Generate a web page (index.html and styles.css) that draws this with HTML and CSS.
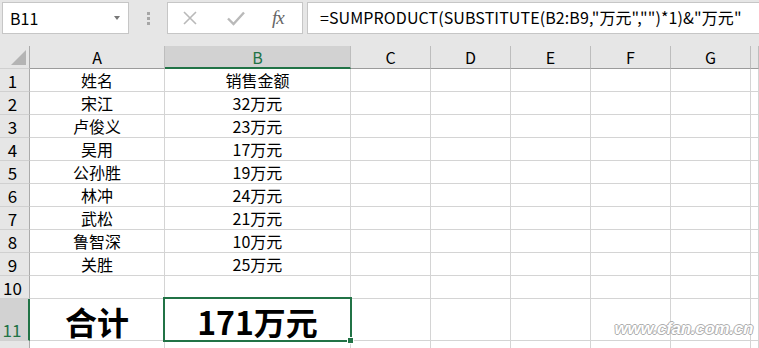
FILE: index.html
```html
<!DOCTYPE html>
<html>
<head>
  <title>Book1 - Excel</title>
  <link rel="stylesheet" href="styles.css">
</head>
<body>
  <div class="toolbar">
    <div class="namebox">
      <span>B11</span>
      <span class="caret"></span>
    </div>
    <div class="grip">
      <i></i><i></i><i></i>
    </div>
    <div class="fbuttons">
      <svg class="btn-icon" width="16" height="16" viewBox="0 0 16 16">
        <path d="M2 2 L14 14 M14 2 L2 14" stroke="#b9b9b9" stroke-width="1.6" fill="none"/>
      </svg>
      <svg class="btn-icon" width="18" height="16" viewBox="0 0 18 16">
        <path d="M1 8.5 L6.5 14 L17 2.5" stroke="#b9b9b9" stroke-width="2.4" fill="none"/>
      </svg>
      <span class="fx">fx</span>
    </div>
    <div class="formula">=SUMPRODUCT(SUBSTITUTE(B2:B9,"万元","")*1)&amp;"万元"</div>
  </div>

  <div class="sheet">
    <div class="row hdr">
      <div class="rh corner"><span class="tri"></span></div>
      <div class="ca">A</div>
      <div class="cb sel">B</div>
      <div class="c">C</div>
      <div class="c">D</div>
      <div class="c">E</div>
      <div class="c">F</div>
      <div class="c">G</div>
      <div class="cx"></div>
    </div>

    <div class="row">
      <div class="rh">1</div>
      <div class="ca">姓名</div>
      <div class="cb">销售金额</div>
      <div class="c"></div><div class="c"></div><div class="c"></div><div class="c"></div><div class="c"></div><div class="cx"></div>
    </div>
    <div class="row">
      <div class="rh">2</div>
      <div class="ca">宋江</div>
      <div class="cb">32万元</div>
      <div class="c"></div><div class="c"></div><div class="c"></div><div class="c"></div><div class="c"></div><div class="cx"></div>
    </div>
    <div class="row">
      <div class="rh">3</div>
      <div class="ca">卢俊义</div>
      <div class="cb">23万元</div>
      <div class="c"></div><div class="c"></div><div class="c"></div><div class="c"></div><div class="c"></div><div class="cx"></div>
    </div>
    <div class="row">
      <div class="rh">4</div>
      <div class="ca">吴用</div>
      <div class="cb">17万元</div>
      <div class="c"></div><div class="c"></div><div class="c"></div><div class="c"></div><div class="c"></div><div class="cx"></div>
    </div>
    <div class="row">
      <div class="rh">5</div>
      <div class="ca">公孙胜</div>
      <div class="cb">19万元</div>
      <div class="c"></div><div class="c"></div><div class="c"></div><div class="c"></div><div class="c"></div><div class="cx"></div>
    </div>
    <div class="row">
      <div class="rh">6</div>
      <div class="ca">林冲</div>
      <div class="cb">24万元</div>
      <div class="c"></div><div class="c"></div><div class="c"></div><div class="c"></div><div class="c"></div><div class="cx"></div>
    </div>
    <div class="row">
      <div class="rh">7</div>
      <div class="ca">武松</div>
      <div class="cb">21万元</div>
      <div class="c"></div><div class="c"></div><div class="c"></div><div class="c"></div><div class="c"></div><div class="cx"></div>
    </div>
    <div class="row">
      <div class="rh">8</div>
      <div class="ca">鲁智深</div>
      <div class="cb">10万元</div>
      <div class="c"></div><div class="c"></div><div class="c"></div><div class="c"></div><div class="c"></div><div class="cx"></div>
    </div>
    <div class="row">
      <div class="rh">9</div>
      <div class="ca">关胜</div>
      <div class="cb">25万元</div>
      <div class="c"></div><div class="c"></div><div class="c"></div><div class="c"></div><div class="c"></div><div class="cx"></div>
    </div>
    <div class="row">
      <div class="rh">10</div>
      <div class="ca"></div>
      <div class="cb"></div>
      <div class="c"></div><div class="c"></div><div class="c"></div><div class="c"></div><div class="c"></div><div class="cx"></div>
    </div>
    <div class="row tall">
      <div class="rh sel">11</div>
      <div class="ca big">合计</div>
      <div class="cb big active">171万元<span class="handle"></span></div>
      <div class="c"></div><div class="c"></div><div class="c"></div><div class="c"></div><div class="c"></div><div class="cx"></div>
    </div>
    <div class="row short">
      <div class="rh"></div>
      <div class="ca"></div>
      <div class="cb"></div>
      <div class="c"></div><div class="c"></div><div class="c"></div><div class="c"></div><div class="c"></div><div class="cx"></div>
    </div>

    <div class="stamp">www.cfan.com.cn</div>
  </div>
</body>
</html>
```

FILE: styles.css
```css
body {
  margin: 0;
  background-color: #e6e6e6;
  font-family: "Noto Sans CJK SC", "Noto Sans", sans-serif;
  color: #000;
  overflow: hidden;
}

/* name box + formula bar */
.toolbar {
  height: 46px;
  display: flex;
  align-items: flex-start;
  padding: 2px 0 0 2px;
  box-sizing: border-box;
}

.namebox {
  width: 127px;
  height: 32px;
  box-sizing: border-box;
  background-color: #fff;
  border: 1px solid #c6c6c6;
  display: flex;
  align-items: center;
  justify-content: space-between;
  padding: 0 8px 0 7px;
  font-size: 16px;
}

.caret {
  width: 0;
  height: 0;
  border-left: 3.5px solid transparent;
  border-right: 3.5px solid transparent;
  border-top: 4px solid #777;
}

.grip {
  width: 38px;
  height: 32px;
  display: flex;
  flex-direction: column;
  align-items: center;
  justify-content: center;
  gap: 2px;
}

.grip i {
  width: 3px;
  height: 3px;
  background-color: #a6a6a6;
}

.fbuttons {
  width: 136px;
  height: 32px;
  box-sizing: border-box;
  background-color: #fff;
  border: 1px solid #c6c6c6;
  display: flex;
  align-items: center;
  padding-left: 14px;
}

.btn-icon {
  margin-right: 29px;
}

.btn-icon + .btn-icon {
  margin-right: 27px;
}

.fx {
  font-family: "Liberation Serif", serif;
  font-style: italic;
  font-size: 19px;
  color: #666;
  letter-spacing: -1px;
}

.formula {
  flex: 1;
  height: 32px;
  margin-left: 4px;
  box-sizing: border-box;
  background-color: #fff;
  border: 1px solid #c6c6c6;
  border-right: none;
  padding-left: 12px;
  font-size: 16px;
  letter-spacing: 0.1px;
  line-height: 29px;
  white-space: nowrap;
}

/* grid */
.sheet {
  position: relative;
  background-color: #fff;
}

.row {
  display: flex;
  height: 23px;
}

.row.tall {
  height: 42px;
}

.row.short {
  height: 8px;
}

.row > div {
  box-sizing: border-box;
  border-right: 1px solid #d4d4d4;
  border-bottom: 1px solid #d4d4d4;
  display: flex;
  align-items: flex-end;
  justify-content: center;
  font-size: 16px;
  line-height: 21px;
  white-space: nowrap;
}

.row.short > div {
  border-bottom: none;
}

.rh {
  width: 30px;
  flex: none;
  background-color: #e6e6e6;
  border-right-color: #ababab !important;
  border-bottom-color: #d0d0d0 !important;
  font-size: 17px !important;
  padding-right: 4px;
}

.ca { width: 135px; flex: none; }
.cb { width: 186px; flex: none; }
.c  { width: 80px; flex: none; }
.cx { flex: 1; }

.hdr > div {
  background-color: #e6e6e6;
  border-right-color: #bdbdbd;
  border-bottom-color: #9b9b9b;
  align-items: center;
  line-height: 20px;
}

.hdr .sel {
  background-color: #d2d2d2;
  color: #217346;
  border-bottom: 2px solid #217346;
}

.rh.sel {
  background-color: #d2d2d2;
  color: #217346;
  border-right: 2px solid #217346 !important;
}

.corner {
  position: relative;
}

.tri {
  position: absolute;
  right: 3px;
  bottom: 3px;
  width: 0;
  height: 0;
  border-left: 15px solid transparent;
  border-bottom: 15px solid #b4b4b4;
}

.big {
  font-size: 32px !important;
  font-weight: bold;
  line-height: 38px !important;
}

.active {
  position: relative;
}

.active::after {
  content: "";
  position: absolute;
  left: -2px;
  top: -2px;
  right: -2px;
  bottom: -2px;
  border: 2px solid #217346;
}

.handle {
  position: absolute;
  right: -4px;
  bottom: -4px;
  width: 5px;
  height: 5px;
  background-color: #217346;
  border: 1px solid #fff;
  z-index: 1;
}

/* site stamp in the lower right corner */
.stamp {
  position: absolute;
  right: 6px;
  bottom: 10px;
  font-family: "Liberation Sans", sans-serif;
  font-style: italic;
  font-weight: bold;
  font-size: 17px;
  letter-spacing: -0.3px;
  color: #fff;
  text-shadow: 1px 0 #a0a0a0, -1px 0 #a0a0a0, 0 1px #a0a0a0, 0 -1px #a0a0a0;
  opacity: 0.85;
}
```
